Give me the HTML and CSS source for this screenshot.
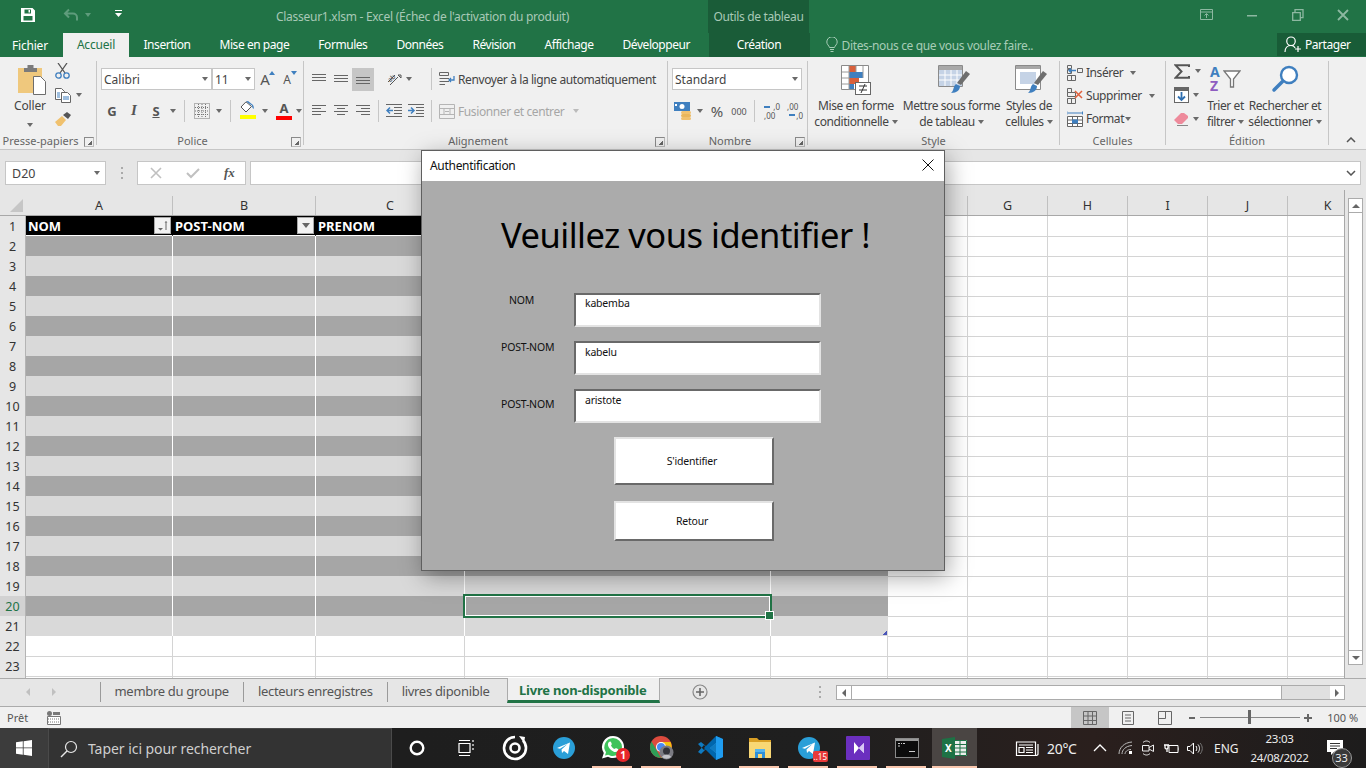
FILE: index.html
```html
<!DOCTYPE html>
<html lang="fr">
<head>
<meta charset="utf-8">
<title>Classeur1.xlsm - Excel</title>
<link rel="stylesheet" href="styles.css">
</head>
<body>
<div class="app">

<header class="titlebar">
  <svg class="qat-save" width="16" height="16" viewBox="0 0 16 16"><path fill="#fff" fill-rule="evenodd" d="M1 1h11.5L15 3.5V15H1zM4.5 2.5V6.5h6.5V2.5zM3.5 9v4.5h9V9z"/><rect x="8.5" y="3" width="1.5" height="2.5" fill="#fff"/></svg>
  <svg class="qat-undo" width="16" height="14" viewBox="0 0 16 14"><path fill="none" stroke="#5f9c7c" stroke-width="2" d="M6 1.5 2 5.5l4 4M2.5 5.5H10a4 4 0 0 1 4 4v3"/></svg>
  <span class="qat-dd"></span>
  <svg class="qat-more" width="7" height="7" viewBox="0 0 7 7"><path fill="#fff" d="M0 0h7v1H0zM0 3h7L3.5 7z"/></svg>
  <div class="doc-title">Classeur1.xlsm - Excel (Échec de l'activation du produit)</div>
  <div class="context-title">Outils de tableau</div>
  <div class="win-btns">
    <svg width="14" height="12" viewBox="0 0 14 12"><path fill="none" stroke="#8db8a1" d="M.5.5h12v10H.5zM.5 3h12M6.5 9V5M4.5 6.5l2-2 2 2"/></svg>
    <svg width="12" height="12" viewBox="0 0 12 12"><rect y="6" width="10" height="1.5" fill="#8db8a1"/></svg>
    <svg width="12" height="12" viewBox="0 0 12 12"><path fill="none" stroke="#8db8a1" stroke-width="1.3" d="M.7 3.7h7.6v7.600H.7zM3 3.5V.7h8v8H8.5"/></svg>
    <svg width="12" height="12" viewBox="0 0 12 12"><path stroke="#8db8a1" stroke-width="1.8" d="M1 1l10 10M11 1 1 11"/></svg>
  </div>
</header>

<nav class="menutabs">
  <a class="mt mt-file">Fichier</a>
  <a class="mt mt-active">Accueil</a>
  <a class="mt">Insertion</a>
  <a class="mt">Mise en page</a>
  <a class="mt">Formules</a>
  <a class="mt">Données</a>
  <a class="mt">Révision</a>
  <a class="mt">Affichage</a>
  <a class="mt">Développeur</a>
  <a class="mt mt-context">Création</a>
  <div class="tell">
    <svg width="12" height="16" viewBox="0 0 12 16"><path fill="none" stroke="#a7cdb7" d="M3.5 10.5C3 8.5.8 7.5.8 5a5.2 5.2 0 0 1 10.400 0c0 2.500-2.200 3.500-2.700 5.500zM4 12.5h4M4.500 14.500h3"/></svg>
    <span>Dites-nous ce que vous voulez faire..</span>
  </div>
  <div class="share">
    <svg width="18" height="17" viewBox="0 0 18 17"><path fill="none" stroke="#fff" stroke-width="1.2" d="M1 16c0-4 2.500-6.500 6-6.500S10.500 11 11 12M7 9.500a4.200 4.200 0 1 0 0-8.500 4.200 4.200 0 0 0 0 8.500zM14 10v6M11 13h6"/></svg>
    <span>Partager</span>
  </div>
</nav>

<section class="ribbon">
  <div class="group g-clip">
    <div class="gbody">
      <div class="big big-paste">
        <svg class="paste-ic" width="28" height="30" viewBox="0 0 28 30"><rect y="3" width="24" height="25" fill="#efc87d"/><path fill="#7b7b7b" d="M6 7V3h3.500V0h6v3H19v4z"/><path fill="#fff" stroke="#6d6d6d" d="M15.500 11.500h7l5 5v13h-12z"/></svg>
        <span>Coller</span>
        <span class="dd dd-paste"></span>
      </div>
      <div class="clipcol">
        <div class="cliprow"><svg width="15" height="16" viewBox="0 0 15 16"><path stroke="#555" stroke-width="1.3" d="M3 0l7 10M12 0 5 10"/><circle cx="3.5" cy="12.5" r="2.7" fill="none" stroke="#3f7fbf" stroke-width="1.3"/><circle cx="11.5" cy="12.5" r="2.7" fill="none" stroke="#3f7fbf" stroke-width="1.3"/></svg></div>
        <div class="cliprow"><svg width="16" height="15" viewBox="0 0 16 15"><path fill="#fff" stroke="#666" d="M.5.5h6l3 3v8h-9z"/><path fill="#fff" stroke="#666" d="M6.500 4.500h6l3 3v7h-9z"/><path stroke="#3f7fbf" d="M2 5h3M2 7h3M2 9h3M8 9h6M8 11h6"/></svg><span class="dd dd-copy"></span></div>
        <div class="cliprow"><svg width="16" height="14" viewBox="0 0 16 14"><path fill="#f0c16e" d="M0 10l7-6 4 4-5 6H3z"/><path fill="#555" d="M8 3l4-3 4 3-3 4z"/></svg></div>
      </div>
    </div>
    <div class="glabel"><span>Presse-papiers</span><i class="launch"></i></div>
  </div>

  <div class="group g-font">
    <div class="gbody stack">
      <div class="trow">
        <div class="combo c-font">Calibri<span class="dd"></span></div>
        <div class="combo c-size">11<span class="dd"></span></div>
        <span class="tb grow-a big-a">A<i class="tri-up"></i></span>
        <span class="tb grow-a small-a">A<i class="tri-down"></i></span>
      </div>
      <div class="trow row2">
        <span class="tb fmt fmt-b">G</span>
        <span class="tb fmt fmt-i">I</span>
        <span class="tb fmt fmt-u">S</span>
        <span class="dd"></span>
        <span class="vsep vs5"></span>
        <span class="tb tb-m3"><svg width="16" height="16" viewBox="0 0 16 16"><path fill="none" stroke="#777" stroke-dasharray="1 1" d="M.5.5h15v15H.5zM8 1v14M1 8h14M4.5 1v14M11.5 1v14M1 4.5h14M1 11.5h14"/></svg></span>
        <span class="dd"></span>
        <span class="vsep vs5"></span>
        <span class="tb tb-m3 colorbtn"><svg width="16" height="12" viewBox="0 0 16 12"><path fill="#fff" stroke="#555" d="M6 .8 1 6l5 5 5.500-5.500z"/><path fill="#3f7fbf" d="M6 .5 8 0l5 4c1 2 1 3 .5 4-1-1-1.500-2-1.500-3.500z"/></svg><i class="bar bar-y"></i></span>
        <span class="dd"></span>
        <span class="tb tb-n tb-m4 colorbtn"><b class="a-letter">A</b><i class="bar bar-r"></i></span>
        <span class="dd"></span>
      </div>
    </div>
    <div class="glabel"><span>Police</span><i class="launch"></i></div>
  </div>

  <div class="group g-align">
    <div class="gbody aligncols">
      <div class="stack acol">
        <div class="trow">
          <span class="tb"><svg width="14" height="10" viewBox="0 0 14 10"><path stroke="#666" d="M0 .5h14M0 3.5h14M0 6.5h14"/></svg></span>
          <span class="tb"><svg width="14" height="10" viewBox="0 0 14 10"><path stroke="#666" d="M0 1.5h14M0 4.5h14M0 7.5h14"/></svg></span>
          <span class="tb tb-on"><svg width="14" height="10" viewBox="0 0 14 10"><path stroke="#666" d="M0 3.5h14M0 6.5h14M0 9.5h14"/></svg></span>
          <span class="tb tb-n tb-m11"><svg width="16" height="16" viewBox="0 0 16 16"><path fill="none" stroke="#555" d="M2 11 9 4M4 14l8-8M12 4l3 3v-3z"/><text x="2" y="10" font-size="6.500" fill="#444" transform="rotate(-40 5 8)">ab</text></svg></span>
          <span class="dd"></span>
          <span class="vsep vs-end"></span>
        </div>
        <div class="trow row2">
          <span class="tb"><svg width="14" height="12" viewBox="0 0 14 12"><path stroke="#666" d="M0 .5h14M0 3.5h9M0 6.5h14M0 9.5h9"/></svg></span>
          <span class="tb"><svg width="14" height="12" viewBox="0 0 14 12"><path stroke="#666" d="M0 .5h14M3 3.5h8M0 6.5h14M3 9.5h8"/></svg></span>
          <span class="tb"><svg width="14" height="12" viewBox="0 0 14 12"><path stroke="#666" d="M0 .5h14M5 3.5h9M0 6.5h14M5 9.5h9"/></svg></span>
          <span class="vsep vs4"></span>
          <span class="tb tb-n tb-m3"><svg width="16" height="14" viewBox="0 0 16 14"><path stroke="#666" d="M0 .5h16M8 3.5h8M8 6.5h8M8 9.5h8M0 12.5h16"/><path stroke="#3f7fbf" stroke-width="1.5" fill="none" d="M7 6.5H1M4 3.5l-3 3 3 3"/></svg></span>
          <span class="tb tb-m2"><svg width="16" height="14" viewBox="0 0 16 14"><path stroke="#666" d="M0 .5h16M8 3.5h8M8 6.5h8M8 9.5h8M0 12.5h16"/><path stroke="#3f7fbf" stroke-width="1.5" fill="none" d="M0 6.5h6M3 3.5l3 3-3 3"/></svg></span>
          <span class="vsep vs-end"></span>
        </div>
      </div>
      <div class="stack bcol">
        <div class="trow wrap-row">
          <svg width="16" height="16" viewBox="0 0 16 16"><path fill="none" stroke="#666" d="M.5 1.5h9v3h-9zM.5 7.5H10M.5 10.5H10M.5 13.5H6"/><path fill="none" stroke="#3f7fbf" stroke-width="1.3" d="M15 5v4h-5M12 7l-2 2 2 2"/></svg>
          <span class="wraptext">Renvoyer à la ligne automatiquement</span>
        </div>
        <div class="trow row2 wrap-row dim">
          <svg width="16" height="15" viewBox="0 0 16 15"><path fill="none" stroke="#b5b5b5" d="M.5.5h15v14H.5zM.5 4.5h15M.5 10.5h15M5 4.5v6M11 4.5v6M6 7.5h4"/></svg>
          <span class="wraptext">Fusionner et centrer</span>
          <span class="dd dd-merge"></span>
        </div>
      </div>
    </div>
    <div class="glabel"><span>Alignement</span><i class="launch"></i></div>
  </div>

  <div class="group g-num">
    <div class="gbody stack">
      <div class="trow"><div class="combo c-num">Standard<span class="dd"></span></div></div>
      <div class="trow row2">
        <span class="tb"><svg width="18" height="18" viewBox="0 0 18 18"><rect width="16" height="9" fill="#3f7fbf"/><circle cx="8" cy="4.5" r="2.5" fill="#fff"/><rect x="1" y="2" width="2" height="2" fill="#fff"/><rect x="7" y="9" width="10" height="3" rx="1.5" fill="#f0c16e"/><rect x="7" y="12" width="10" height="3" rx="1.5" fill="#e9b65b"/><rect x="7" y="15" width="10" height="3" rx="1.5" fill="#f0c16e"/></svg></span>
        <span class="dd"></span>
        <span class="tb pct">%</span>
        <span class="tb thou">000</span>
        <span class="vsep vs4"></span>
        <span class="tb tb-m3 dec-ic"><i class="dec-top">,0</i><i class="dec-arrow-l"></i><i class="dec-bot">,00</i></span>
        <span class="tb tb-m1 dec-ic"><i class="dec-top-l">,00</i><i class="dec-arrow-r"></i><i class="dec-bot-r">,0</i></span>
      </div>
    </div>
    <div class="glabel"><span>Nombre</span><i class="launch"></i></div>
  </div>

  <div class="group g-style">
    <div class="gbody bigs">
      <div class="big b-cond">
        <svg width="30" height="30" viewBox="0 0 30 30"><path fill="#fff" stroke="#8a8a8a" d="M.5.5h27v24H.5z"/><rect x="8" y="1" width="7" height="6" fill="#d9603b"/><rect x="8" y="7" width="14" height="6" fill="#3f7fbf"/><rect x="8" y="13" width="10" height="6" fill="#d9603b"/><rect x="8" y="19" width="5" height="5" fill="#3f7fbf"/><path stroke="#9a9a9a" d="M8 1v24M15 1v6M22 1v12M1 7h7M1 13h7M1 19h7"/><rect x="14.5" y="17.5" width="15" height="12" fill="#fff" stroke="#666"/><path stroke="#333" d="M18 21h8M18 25h8M20 28l4-9"/></svg>
        <span class="blabel">Mise en forme</span>
        <span class="blabel">conditionnelle<i class="dd dd-in"></i></span>
      </div>
      <div class="big b-table">
        <svg class="shift-ic" width="32" height="30" viewBox="0 0 32 30"><path fill="#fff" stroke="#8a8a8a" d="M.5.5h24v21H.5z"/><rect x="1" y="1" width="23" height="4" fill="#a8a8a8"/><path fill="#c5d3e6" d="M1 5h23v16H1z"/><path stroke="#fff" d="M7 5v16M13 5v16M19 5v16M1 10h23M1 15h23"/><path fill="#6e6e6e" d="M28 6l4 3-9 11-4-2z"/><path fill="#3f7fbf" d="M18 19l4 2c0 4-3 7-9 7 3-2 2-7 5-9z"/></svg>
        <span class="blabel">Mettre sous forme</span>
        <span class="blabel">de tableau<i class="dd dd-in"></i></span>
      </div>
      <div class="big b-cell">
        <svg class="shift-ic" width="32" height="30" viewBox="0 0 32 30"><path fill="#fff" stroke="#8a8a8a" d="M.5.5h25v24H.5z"/><rect x="1" y="1" width="24" height="3" fill="#a8a8a8"/><rect x="5" y="7" width="16" height="12" fill="#c5d3e6"/><path fill="#6e6e6e" d="M28 6l4 3-9 11-4-2z"/><path fill="#3f7fbf" d="M18 19l4 2c0 4-3 7-9 7 3-2 2-7 5-9z"/></svg>
        <span class="blabel">Styles de</span>
        <span class="blabel">cellules<i class="dd dd-in"></i></span>
      </div>
    </div>
    <div class="glabel"><span>Style</span></div>
  </div>

  <div class="group g-cells">
    <div class="gbody cellcol">
      <div class="cellrow">
        <svg width="16" height="16" viewBox="0 0 16 16"><path fill="none" stroke="#666" d="M.5 4.5h4v4h-4zM.5 10.5h8v5h-8zM4.5 10.5v5M.5.5h4v3h-4zM10.5 3.5h5v4h-5z"/><path fill="none" stroke="#3f7fbf" stroke-width="1.3" d="M9 5.5H2M4 3.5l-2 2 2 2"/></svg>
        <span>Insérer</span><i class="dd dd-m1"></i>
      </div>
      <div class="cellrow">
        <svg width="16" height="16" viewBox="0 0 16 16"><path fill="none" stroke="#666" d="M.5.5h4v4h-4zM.5 4.5h8v4h-8zM.5 10.5h8v5h-8zM4.5 10.5v5"/><path stroke="#e0603c" stroke-width="1.5" d="M8 3l7 7M15 3l-7 7"/></svg>
        <span>Supprimer</span><i class="dd dd-m1"></i>
      </div>
      <div class="cellrow">
        <svg width="16" height="16" viewBox="0 0 16 16"><path stroke="#3f7fbf" fill="none" d="M0 .5v3M15.5.5v3M1 2h14"/><path fill="#fff" stroke="#666" d="M.5 5.5h15v10H.5zM5.5 5.5v10M10.5 5.5v10M.5 9h15M.5 12.5h15"/><rect x="5" y="8.5" width="6" height="4" fill="#3f7fbf"/></svg>
        <span>Format</span><i class="dd dd-fm"></i>
      </div>
    </div>
    <div class="glabel"><span>Cellules</span></div>
  </div>

  <div class="group g-edit">
    <div class="gbody editcols">
      <div class="editcol">
        <div class="editrow"><svg width="16" height="15" viewBox="0 0 16 15"><path fill="none" stroke="#555" stroke-width="2" d="M15 3V1.200H1.500L7.500 7.500 1.500 13.800H15V12"/></svg><i class="dd dd-e1"></i></div>
        <div class="editrow"><svg width="15" height="16" viewBox="0 0 15 16"><rect x=".5" y=".5" width="14" height="15" fill="#fff" stroke="#666"/><rect x="1" y="1" width="13" height="3" fill="#666"/><path stroke="#2f6fb0" fill="none" stroke-width="1.8" d="M7.5 5v8M4 9.5l3.5 3.500L11 9.500"/></svg><i class="dd dd-e2"></i></div>
        <div class="editrow"><svg width="15" height="14" viewBox="0 0 15 14"><path fill="#ee8a9b" d="M0 8l7-7h3l4 3v2l-6 6H4z"/><path stroke="#888" d="M3 13.5h11"/></svg><i class="dd dd-e2"></i></div>
      </div>
      <div class="big b-sort">
        <div class="sort-ic">
          <span class="sort-letters"><i class="az-a">A</i><i class="az-z">Z</i></span>
          <svg width="18" height="18" viewBox="0 0 18 18"><path fill="#fff" stroke="#777" stroke-width="1.3" d="M1 1h16l-6.500 8v8h-3V9z"/></svg>
        </div>
        <span class="blabel">Trier et</span>
        <span class="blabel">filtrer<i class="dd dd-in"></i></span>
      </div>
      <div class="big b-find">
        <svg width="28" height="28" viewBox="0 0 28 28"><circle cx="18" cy="10" r="8" fill="#fff" stroke="#3f7fbf" stroke-width="2.4"/><path stroke="#3f7fbf" stroke-width="3.5" stroke-linecap="round" d="M11.5 16.5 3 25"/></svg>
        <span class="blabel">Rechercher et</span>
        <span class="blabel">sélectionner<i class="dd dd-in"></i></span>
      </div>
    </div>
    <div class="glabel"><span>Édition</span></div>
  </div>

  <div class="collapse"><svg width="10" height="6" viewBox="0 0 10 6"><path fill="none" stroke="#555" stroke-width="1.5" d="M1 5l4-4 4 4"/></svg></div>
</section>

<section class="formula">
  <div class="namebox">D20<span class="dd dd-name"></span></div>
  <div class="fdots"></div>
  <div class="fbtns">
    <svg width="12" height="12" viewBox="0 0 12 12"><path stroke="#c0c0c0" stroke-width="1.6" d="M1 1l10 10M11 1 1 11"/></svg>
    <svg width="14" height="12" viewBox="0 0 14 12"><path fill="none" stroke="#c0c0c0" stroke-width="2" d="M1 6l4 4 8-8"/></svg>
    <span class="fx">fx</span>
  </div>
  <div class="finput"><svg width="10" height="6" viewBox="0 0 10 6"><path fill="none" stroke="#555" stroke-width="1.5" d="M1 1l4 4 4-4"/></svg></div>
</section>

<section class="sheet">
  <div class="grid">
    <div class="colheads">
      <div class="corner"><i></i></div>
      <div class="ch">A</div><div class="ch">B</div><div class="ch">C</div><div class="ch">D</div><div class="ch">E</div><div class="ch">F</div><div class="ch">G</div><div class="ch">H</div><div class="ch">I</div><div class="ch">J</div><div class="ch">K</div>
    </div>
    <div class="row head"><b>1</b><i>NOM<span class="filter"><svg width="10" height="10" viewBox="0 0 10 10"><path fill="#666" d="M0 7h5L2.5 9.5zM6.5 1.5 8 0l1.5 1.5H8.500V9h-1V1.500z"/></svg></span></i><i>POST-NOM<span class="filter"><svg width="8" height="5" viewBox="0 0 8 5"><path fill="#666" d="M0 0h8L4 5z"/></svg></span></i><i>PRENOM</i><i></i><i></i><i></i><i></i><i></i><i></i><i></i><i></i></div>
    <div class="row dark"><b>2</b><i></i><i></i><i></i><i></i><i></i><i></i><i></i><i></i><i></i><i></i><i></i></div>
    <div class="row light"><b>3</b><i></i><i></i><i></i><i></i><i></i><i></i><i></i><i></i><i></i><i></i><i></i></div>
    <div class="row dark"><b>4</b><i></i><i></i><i></i><i></i><i></i><i></i><i></i><i></i><i></i><i></i><i></i></div>
    <div class="row light"><b>5</b><i></i><i></i><i></i><i></i><i></i><i></i><i></i><i></i><i></i><i></i><i></i></div>
    <div class="row dark"><b>6</b><i></i><i></i><i></i><i></i><i></i><i></i><i></i><i></i><i></i><i></i><i></i></div>
    <div class="row light"><b>7</b><i></i><i></i><i></i><i></i><i></i><i></i><i></i><i></i><i></i><i></i><i></i></div>
    <div class="row dark"><b>8</b><i></i><i></i><i></i><i></i><i></i><i></i><i></i><i></i><i></i><i></i><i></i></div>
    <div class="row light"><b>9</b><i></i><i></i><i></i><i></i><i></i><i></i><i></i><i></i><i></i><i></i><i></i></div>
    <div class="row dark"><b>10</b><i></i><i></i><i></i><i></i><i></i><i></i><i></i><i></i><i></i><i></i><i></i></div>
    <div class="row light"><b>11</b><i></i><i></i><i></i><i></i><i></i><i></i><i></i><i></i><i></i><i></i><i></i></div>
    <div class="row dark"><b>12</b><i></i><i></i><i></i><i></i><i></i><i></i><i></i><i></i><i></i><i></i><i></i></div>
    <div class="row light"><b>13</b><i></i><i></i><i></i><i></i><i></i><i></i><i></i><i></i><i></i><i></i><i></i></div>
    <div class="row dark"><b>14</b><i></i><i></i><i></i><i></i><i></i><i></i><i></i><i></i><i></i><i></i><i></i></div>
    <div class="row light"><b>15</b><i></i><i></i><i></i><i></i><i></i><i></i><i></i><i></i><i></i><i></i><i></i></div>
    <div class="row dark"><b>16</b><i></i><i></i><i></i><i></i><i></i><i></i><i></i><i></i><i></i><i></i><i></i></div>
    <div class="row light"><b>17</b><i></i><i></i><i></i><i></i><i></i><i></i><i></i><i></i><i></i><i></i><i></i></div>
    <div class="row dark"><b>18</b><i></i><i></i><i></i><i></i><i></i><i></i><i></i><i></i><i></i><i></i><i></i></div>
    <div class="row light"><b>19</b><i></i><i></i><i></i><i></i><i></i><i></i><i></i><i></i><i></i><i></i><i></i></div>
    <div class="row dark current"><b>20</b><i></i><i></i><i></i><i class="selected"><span class="selbox"></span></i><i></i><i></i><i></i><i></i><i></i><i></i><i></i></div>
    <div class="row light"><b>21</b><i></i><i></i><i></i><i></i><i class="tbl-end"><span class="resizer"></span></i><i></i><i></i><i></i><i></i><i></i><i></i></div>
    <div class="row"><b>22</b><i></i><i></i><i></i><i></i><i></i><i></i><i></i><i></i><i></i><i></i><i></i></div>
    <div class="row"><b>23</b><i></i><i></i><i></i><i></i><i></i><i></i><i></i><i></i><i></i><i></i><i></i></div>
    <div class="row"><b></b><i></i><i></i><i></i><i></i><i></i><i></i><i></i><i></i><i></i><i></i><i></i></div>
  </div>
  <div class="vscroll">
    <div class="sbtn"><i class="t-up"></i></div>
    <div class="strack"></div>
    <div class="sbtn"><i class="t-dn"></i></div>
  </div>
</section>

<section class="sheettabs">
  <div class="tabnav"><i class="nav-l"></i><i class="nav-r"></i></div>
  <a class="stab">membre du groupe</a>
  <a class="stab">lecteurs enregistres</a>
  <a class="stab">livres diponible</a>
  <a class="stab-on">Livre non-disponible</a>
  <svg class="addsheet" width="16" height="16" viewBox="0 0 16 16"><circle cx="8" cy="8" r="7" fill="none" stroke="#888" stroke-width="1.2"/><path stroke="#666" stroke-width="1.6" d="M8 4v8M4 8h8"/></svg>
  <div class="tabdots"></div>
  <div class="hscroll">
    <div class="hbtn"><i class="t-l"></i></div>
    <div class="hthumb"></div>
    <div class="htrack"></div>
    <div class="hbtn"><i class="t-r"></i></div>
  </div>
</section>

<footer class="status">
  <span class="ready">Prêt</span>
  <svg width="14" height="14" viewBox="0 0 14 14"><circle cx="2.5" cy="2.5" r="2.5" fill="#777"/><rect x="6" y="1" width="7" height="3" fill="#777"/><path fill="#fff" stroke="#777" d="M.5 5.5h13v8H.5z"/><path stroke="#777" stroke-dasharray="1 1" d="M1 8h12M1 11h12"/></svg>
  <div class="views">
    <span class="view view-on"><svg width="14" height="14" viewBox="0 0 14 14"><path fill="none" stroke="#666" d="M.5.5h13v13H.5zM5 .5v13M9.500.5v13M.5 5h13M.5 9.500h13"/></svg></span>
    <span class="view"><svg width="14" height="14" viewBox="0 0 14 14"><path fill="none" stroke="#666" d="M1.5.5h11v13h-11zM4 4h6M4 7h6M4 10h6"/></svg></span>
    <span class="view"><svg width="14" height="14" viewBox="0 0 14 14"><path fill="none" stroke="#666" d="M.5.5h13v13H.5zM7.500.5v7H.5"/></svg></span>
  </div>
  <div class="zoomctl">
    <i class="zm"></i>
    <div class="slider"><i></i></div>
    <i class="zp"></i>
    <span class="zval">100 %</span>
  </div>
</footer>

<footer class="taskbar">
  <div class="start"><svg width="16" height="16" viewBox="0 0 16 16"><path fill="#fff" d="M0 2.300 6.800 1.300V7.500H0zM7.600 1.200 16 0V7.500H7.600zM0 8.300H6.800V14.700L0 13.700zM7.600 8.300H16V16L7.600 14.800z"/></svg></div>
  <div class="searchbox">
    <svg width="18" height="18" viewBox="0 0 18 18"><circle cx="11" cy="7" r="5.5" fill="none" stroke="#e8e8e8" stroke-width="1.2"/><path stroke="#e8e8e8" stroke-width="1.4" d="M7 11 1 17"/></svg>
    <span>Taper ici pour rechercher</span>
  </div>
  <div class="apps">
    <div class="app-i"><svg width="16" height="16" viewBox="0 0 16 16"><circle cx="8" cy="8" r="6.3" fill="none" stroke="#fff" stroke-width="2.4"/></svg></div>
    <div class="app-i"><svg width="18" height="18" viewBox="0 0 18 18"><path fill="none" stroke="#fff" stroke-width="1.2" d="M2 4.5h11v9H2zM2 1.500h11M2 16.500h11M16 1v2M16 5v2M16 9v2"/></svg></div>
    <div class="app-i"><svg width="26" height="26" viewBox="0 0 26 26"><path fill="none" stroke="#fff" stroke-width="2.6" d="M13 2a11 11 0 1 0 11 11c0-3-1-5.500-3-7.500"/><circle cx="13" cy="13" r="4.5" fill="none" stroke="#fff" stroke-width="2.6"/><path fill="#fff" d="M17 1l6 1-1 6z"/></svg></div>
    <div class="app-i"><svg width="22" height="22" viewBox="0 0 22 22"><circle cx="11" cy="11" r="11" fill="#2a9fd8"/><path fill="#fff" d="M4 11l13-5.500-2 11.500-4-3-2 2-.5-3.500 6-5.500-7.500 4.800z"/></svg></div>
    <div class="app-i on"><svg width="24" height="26" viewBox="0 0 24 26"><path fill="#fff" d="M12 1a11 11 0 0 1 0 22c-2 0-3.500-.5-5-1.300L1 23.500l1.800-5.500A11 11 0 0 1 12 1z"/><path fill="#3fc35b" d="M12 3a9 9 0 0 1 0 18c-1.800 0-3.300-.5-4.700-1.300L4 20.500l1-3.300A9 9 0 0 1 12 3z"/><path fill="#fff" d="M8 7c1-1 2-.5 2.500 1s0 2-.5 2.500c1 1.800 2 2.800 3.500 3.500.5-.5 1-1.200 2.500-.5s2 1.500 1 2.500c-2 2-5 1-7.500-1.500S6 9 8 7z"/></svg><span class="badge badge-wa">1</span></div>
    <div class="app-i on"><svg width="24" height="24" viewBox="0 0 24 24"><circle cx="11" cy="11" r="11" fill="#dd4b3e"/><path fill="#f4c20d" d="M11 6h9.500A11 11 0 0 1 11 22l5-8z"/><path fill="#2f9e57" d="M1.500 5.500 6.500 14l4.500 8A11 11 0 0 1 1.500 5.500z"/><circle cx="11" cy="11" r="5" fill="#fff"/><circle cx="11" cy="11" r="4" fill="#4a8af4"/><circle cx="16.5" cy="16.5" r="7" fill="#7b7b82"/><circle cx="16.5" cy="15" r="3.5" fill="#33333a"/><path fill="#c3c3c8" d="M12 21c1-3 8-3 9 0a7 7 0 0 1-9 0z"/></svg></div>
    <div class="app-i"><svg width="26" height="26" viewBox="0 0 26 26"><path fill="#0f7ac0" d="M0 9l3-2 6 5-3 3zM0 17l3 2 6-6-3-3z"/><path fill="#0066ad" d="M18 1l7 3v18l-7 3-12-12z"/><path fill="#1f9cf0" d="M18 1l7 3v18l-7 3zM18 8l-6 5 6 5z"/><path fill="#0f7ac0" d="M18 8v10l-6-5z"/></svg></div>
    <div class="app-i on"><svg width="22" height="20" viewBox="0 0 22 20"><path fill="#d99f25" d="M0 0h8l2 2h12v4H0z"/><path fill="#f8d775" d="M0 4h22v16H0z"/><path fill="#2e8fd8" d="M6 11h10v9h-3v-4H9v4H6z"/><rect x="6" y="11" width="10" height="3" fill="#54b4ee"/></svg></div>
    <div class="app-i on"><svg width="22" height="22" viewBox="0 0 22 22"><circle cx="11" cy="11" r="11" fill="#2a9fd8"/><path fill="#fff" d="M4 11l13-5.500-2 11.500-4-3-2 2-.5-3.500 6-5.500-7.500 4.800z"/></svg><span class="badge badge-tg">..15</span></div>
    <div class="app-i on"><svg width="24" height="24" viewBox="0 0 24 24"><rect width="24" height="24" rx="1" fill="#6b2fbf"/><path fill="#fff" d="M8 6v12l5-6zM13 12l5-5v10z"/><path fill="#d8c8f5" d="M13 12l5-5v10z"/></svg></div>
    <div class="app-i on"><svg width="24" height="20" viewBox="0 0 24 20"><rect x=".5" y=".5" width="23" height="19" fill="#0c0c0c" stroke="#8a8a8a"/><rect x="1" y="1" width="22" height="2" fill="#9a9a9a"/><path stroke="#ccc" d="M3 5.500h2M6 5.500h1M8 5.500h2M3 8h2M14 13.500h6"/></svg></div>
    <div class="app-i on active"><svg width="25" height="22" viewBox="0 0 25 22"><rect x="11" y="3" width="14" height="16" fill="#fff" opacity=".9"/><path stroke="#1d7245" fill="none" d="M12 3.500h12.500v15H12zM18 3.500v15M12 7.500h12.500M12 11h12.500M12 15h12.500"/><path fill="#1d7245" d="M0 2l13-2v22L0 20z"/><text x="3" y="15" font-size="10" font-weight="700" font-family="Noto Sans" fill="#fff">X</text></svg></div>
  </div>
  <div class="tray">
    <svg class="tr-news" width="24" height="17" viewBox="0 0 24 17"><path fill="none" stroke="#fff" stroke-width="1.2" d="M1.500 2h19v13.500h-19zM23 4v10c0 1-1 1.500-2.500 1.500M4 5h14M4 7.500h5v5H4zM11 7.500h7M11 10h7M11 12.500h7"/></svg>
    <span class="tr-temp">20°C</span>
    <svg class="tr-up" width="14" height="8" viewBox="0 0 14 8"><path fill="none" stroke="#fff" stroke-width="1.3" d="M1 7l6-6 6 6"/></svg>
    <svg class="tr-wifi" width="15" height="14" viewBox="0 0 15 14"><path fill="none" stroke="#bbb" d="M1 13C1 7 6 1.500 14 1M4 13c0-4 3.500-8 10-8.500M7 13c0-2 2-4.500 6-4.500"/><rect x="11" y="10" width="3" height="3" fill="#fff"/></svg>
    <svg class="tr-cam" width="14" height="16" viewBox="0 0 14 16"><path fill="none" stroke="#eee" d="M1.500 5.500h6.500v5.500H1.500zM8 7.500l4.500-2.500v6.500l-4.500-2.500M2 2.500c2-2 5-2 7 0M2 13.500c2 2 5 2 7 0"/></svg>
    <svg class="tr-pow" width="15" height="11" viewBox="0 0 15 11"><path fill="none" stroke="#fff" d="M5 2.500h9v7H5zM15 4.500v3"/><path fill="none" stroke="#fff" stroke-width="1.3" d="M1 2v2.500c0 1 1 1.500 2 1.500M4 2v2.500c0 1-1 1.500-1 1.500v3M0 2h5"/></svg>
    <svg class="tr-vol" width="16" height="13" viewBox="0 0 16 13"><path fill="none" stroke="#fff" d="M.5 4.500h2.500l3.500-3.500v11L3 8.500H.5zM9 4c1 1.500 1 3.500 0 5M11 2.500c2 2.500 2 5.500 0 8"/><path fill="none" stroke="#777" d="M13 1c3 3 3 8 0 11"/></svg>
    <span class="tr-lang">ENG</span>
    <div class="tr-clock"><span>23:03</span><span>24/08/2022</span></div>
    <div class="tr-notif">
      <svg width="16" height="15" viewBox="0 0 16 15"><path fill="#fff" d="M0 0h16v12H7l-3 3v-3H0z"/><path stroke="#333" d="M3 3.500h10M3 6h10M3 8.500h7"/></svg>
      <span class="notif-count">33</span>
    </div>
  </div>
</footer>

<div class="dialog">
  <div class="dlg-title">
    <span>Authentification</span>
    <svg width="12" height="12" viewBox="0 0 12 12"><path stroke="#111" stroke-width="1" d="M.5.5l11 11M11.500.5l-11 11"/></svg>
  </div>
  <div class="dlg-body">
    <h1 class="dlg-heading">Veuillez vous identifier !</h1>
    <div class="frow"><label class="flabel fl-nom">NOM</label><div class="field field-first">kabemba</div></div>
    <div class="frow"><label class="flabel fl-post">POST-NOM</label><div class="field">kabelu</div></div>
    <div class="frow"><label class="flabel fl-pre">POST-NOM</label><div class="field">aristote</div></div>
    <button class="dbtn dbtn-login">S'identifier</button>
    <button class="dbtn dbtn-back">Retour</button>
  </div>
</div>

</div>
</body>
</html>
```

FILE: styles.css
```css
*{box-sizing:border-box}
html,body{margin:0;padding:0;height:768px;overflow:hidden}
body{font-family:"Noto Sans","Open Sans",sans-serif;font-size:12px;color:#444}
.app{position:relative;width:1366px;height:768px;display:flex;flex-direction:column;overflow:hidden;background:#e6e6e6}
svg{display:block;flex:none}

/* title bar */
.titlebar{height:33px;background:#217346;display:flex;align-items:center;flex:none;color:#a8c9b6}
.qat-save{margin-left:20px;margin-bottom:4px}
.qat-undo{margin-left:27px;margin-bottom:4px}
.qat-dd{width:0;height:0;margin-left:6px;margin-bottom:4px;border:3px solid transparent;border-top:4px solid #5f9c7c;border-bottom:0}
.qat-more{margin-left:24px;margin-bottom:6px}
.doc-title{margin-left:154px;width:432px;letter-spacing:-.28px;white-space:nowrap}
.context-title{width:101px;height:33px;background:#1a5c38;text-align:center;line-height:33px;letter-spacing:-.35px;white-space:nowrap}
.win-btns{margin-left:auto;display:flex;align-items:center;gap:33px;padding-right:17px;margin-bottom:4px}

/* menu tabs */
.menutabs{height:24px;background:#217346;display:flex;align-items:stretch;flex:none}
.mt{color:#fff;padding:0 14.5px;line-height:23px;letter-spacing:-.45px;white-space:nowrap}
.mt-file{width:63px;padding:0 0 0 12px;line-height:25px;letter-spacing:-.2px}
.mt-active{width:66px;padding:0;text-align:center;background:#f0f0f0;color:#217346;letter-spacing:-.2px}
.mt-context{background:#1a5c38;width:101px;padding:0;margin-left:4px;text-align:center}
.tell{display:flex;align-items:center;gap:4px;margin-left:16px;color:#a7cdb7;letter-spacing:-.35px;white-space:nowrap}
.share{margin-left:auto;width:89px;background:#185c37;color:#fff;display:flex;align-items:center;gap:3px;padding:0 0 0 7px;height:23px;white-space:nowrap;letter-spacing:-.45px}

/* ribbon */
.ribbon{height:93px;background:#f0f0f0;border-bottom:1px solid #c6c6c6;display:flex;padding-top:4px;flex:none}
.group{height:84px;border-right:1px solid #c6c6c6;display:flex;flex-direction:column;flex:none}
.g-clip{width:97px}
.g-font{width:207px;padding-left:4px}
.g-align{width:364px;padding-left:4px}
.g-num{width:140px;padding-left:4px}
.g-style{width:252px;padding-left:4px}
.g-cells{width:106px;padding-left:7px}
.g-edit{width:163px;padding-left:6px}
.gbody{height:73px;flex:none;display:flex}
.glabel{height:14px;margin-bottom:-3px;display:flex;align-items:center;font-size:11px;line-height:14px;color:#666;white-space:nowrap}
.g-font .glabel,.g-align .glabel,.g-num .glabel,.g-style .glabel{margin-left:-4px}
.g-cells .glabel{margin-left:-7px}
.g-edit .glabel{margin-left:-6px}
.glabel span{flex:1;text-align:center}
.launch{width:15px;height:14px;flex:none;position:relative}
.launch::before{content:"";position:absolute;left:3px;top:3px;width:8px;height:8px;border:1px solid #8a8a8a;border-right-color:#bbb;border-bottom-color:#bbb}
.launch::after{content:"";position:absolute;left:7px;top:7px;width:4px;height:4px;background:linear-gradient(135deg,transparent 50%,#666 50%)}
.stack{flex-direction:column;padding-top:7px}
.trow{display:flex;align-items:center;height:22px}
.row2{margin-top:10px}
.dd{display:inline-flex;flex:none;width:12px;height:6px;align-items:center;justify-content:center}
.dd::before{content:"";border:3.5px solid transparent;border-top:4px solid #6a6a6a;border-bottom:0}
.tb{width:22px;height:22px;display:flex;align-items:center;justify-content:center;flex:none}
.tb-n{width:18px}
.tb-on{background:#c6c6c6;height:23px}
.tb-m1{margin-left:1px}.tb-m2{margin-left:2px}.tb-m3{margin-left:3px}.tb-m4{margin-left:4px}.tb-m11{margin-left:11px}
.vsep{width:1px;height:22px;background:#c6c6c6;flex:none}
.vs4{margin:0 3px 0 4px}
.vs5{margin:0 3px 0 5px}
.vs-end{margin-left:auto}

/* clipboard */
.big{display:flex;flex-direction:column;align-items:center;flex:none;padding-top:4px;font-size:12px;line-height:16px;letter-spacing:-.42px;white-space:nowrap}
.big>svg{height:30px;margin-bottom:3px}
.big-paste{width:40px;margin-left:10px;letter-spacing:-.15px}
.paste-ic{margin-left:4px}
.shift-ic{margin-left:4px}
.dd-paste{margin-top:8px}
.clipcol{margin-left:5px;display:flex;flex-direction:column;padding-top:2px;gap:8px}
.cliprow{display:flex;align-items:center;height:16px}
.dd-copy{margin-left:2px}

/* font group */
.combo{height:22px;background:#fff;border:1px solid #c6c6c6;display:flex;align-items:center;padding-left:2px;color:#444;flex:none}
.combo .dd{margin-left:auto}
.c-font{width:111px}
.c-size{width:43px}
.c-num{width:130px}
.grow-a{color:#555;position:relative;font-size:15px}
.big-a{margin-left:-1px}
.small-a{font-size:12px}
.tri-up,.tri-down{position:absolute;right:1px;top:3px;border:3px solid transparent}
.tri-up{border-bottom:4px solid #3f7fbf;border-top:0}
.tri-down{border-top:4px solid #3f7fbf;border-bottom:0}
.fmt{font-size:13px;font-weight:700;color:#555;margin-top:-1px}
.fmt-i{font-style:italic;font-family:"Liberation Serif",serif;font-size:15px}
.fmt-u{text-decoration:underline}
.colorbtn{position:relative;flex-direction:column;justify-content:flex-start;padding-top:1px}
.bar{display:block;width:16px;height:4px;flex:none;margin-top:2px}
.bar-y{background:#ffff00}
.bar-r{background:#ff0000;margin-top:0}
.a-letter{font-size:13px;line-height:15px;color:#555;font-weight:700}

/* align */
.aligncols{padding:0}
.acol{width:124px;display:flex}
.bcol{display:flex;padding-left:7px}
.wrap-row{gap:3px}
.wraptext{letter-spacing:-.4px;white-space:nowrap;color:#444}
.dim .wraptext{color:#a6a6a6}
.dd-merge{margin-left:3px}
.dd-merge::before{border-top-color:#bbb}

/* number */
.pct{font-size:15px;color:#555}
.thou{font-size:9px;color:#555}
.dec-ic{flex-direction:column;align-items:stretch;justify-content:center;font-size:8px;line-height:9px;color:#555;position:relative;padding:0 3px}
.dec-ic i{font-style:normal;display:block}
.dec-top,.dec-bot-r{text-align:right}
.dec-arrow-l,.dec-arrow-r{position:absolute;height:2px;width:6px;background:#3f7fbf}
.dec-arrow-l{left:3px;top:6px}
.dec-arrow-r{left:5px;bottom:6px}

/* style */
.bigs{padding:0}
.b-cond{width:88px}
.b-table{width:97px;margin-left:3px}
.b-cell{width:48px;margin-left:5px}
.blabel{display:flex;align-items:center;color:#444}
.dd-in{width:12px;margin-right:-3px}

/* cells */
.cellcol{flex-direction:column}
.cellrow{height:23px;display:flex;align-items:center;gap:3px;letter-spacing:-.45px;white-space:nowrap}
.dd-m1{margin-left:1px}
.dd-fm{margin-left:-5px}

/* edit */
.editcols{padding:0}
.editcol{width:34px;display:flex;flex-direction:column;padding-top:2px;padding-left:2px;gap:8px}
.editrow{display:flex;align-items:center;height:16px}
.dd-e1{margin-left:2px}
.dd-e2{margin-left:1px}
.b-sort{width:39px}
.b-find{width:76px;margin-left:2px}
.b-find>svg{height:28px;margin-bottom:5px}
.sort-ic{height:28px;margin-bottom:5px;display:flex;align-items:center}
.sort-letters{display:flex;flex-direction:column;width:13px;font-size:14px;font-weight:700;line-height:14px}
.sort-letters i{font-style:normal;display:block;height:14px}
.az-a{color:#3f7fbf}
.az-z{color:#8e5cc0}

.collapse{margin-left:auto;padding:76px 10px 0 0}

/* formula bar */
.formula{height:40px;background:#e6e6e6;display:flex;align-items:flex-start;padding:11px 5px 0;flex:none}
.namebox{width:101px;height:24px;background:#fff;border:1px solid #c6c6c6;display:flex;align-items:center;padding-left:6px;font-size:12.5px;color:#444}
.dd-name{margin-left:auto;margin-right:2px}
.fdots{width:2px;height:12px;margin:6px 14px 0 15px;background:repeating-linear-gradient(#aaa 0 2px,transparent 2px 5px)}
.fbtns{width:109px;height:24px;background:#fff;border:1px solid #c6c6c6;display:flex;align-items:center;padding-left:12px;gap:24px}
.fx{font-family:"Liberation Serif",serif;font-style:italic;font-weight:700;font-size:13px;color:#555}
.finput{margin-left:4px;flex:1;height:24px;background:#fff;border:1px solid #c6c6c6;display:flex;align-items:center;justify-content:flex-end;padding-right:4px}

/* sheet */
.sheet{height:488px;display:flex;flex:none;background:#e6e6e6}
.grid{width:1345px;height:488px;overflow:hidden;flex:none;border-right:1px solid #a8a8a8;background:#fff}
.colheads,.row{display:grid;grid-template-columns:26px 147px 143px 149px 306px 117px repeat(6,80px)}
.colheads{height:26px;padding-top:6px;background:#e6e6e6;border-bottom:1px solid #a8a8a8}
.corner{position:relative}
.corner i{position:absolute;right:3px;bottom:3px;border-left:13px solid transparent;border-bottom:13px solid #c6c6c6}
.ch{height:19px;line-height:19px;text-align:center;border-right:1px solid #c0c0c0;color:#333;font-size:12.5px}
.row{height:20px}
.row b{background:#e6e6e6;font-weight:400;font-size:12.5px;color:#333;text-align:center;line-height:21px;border-right:1px solid #b4b4b4}
.row i{display:block;border-right:1px solid #d4d4d4;border-bottom:1px solid #d4d4d4;font-style:normal;position:relative;min-width:0}
.dark i:nth-child(-n+6),.light i:nth-child(-n+6){border-color:#fff}
.dark i:nth-child(-n+6){background:#a6a6a6}
.light i:nth-child(-n+6){background:#d9d9d9}
.dark i:nth-child(6),.light i:nth-child(6){border-right-color:transparent}
.head i:nth-child(-n+6){background:#000;color:#fff;font-weight:700;font-size:13px;line-height:18px;border-bottom:2px solid #fff;border-right:1px solid #000;display:flex;align-items:center;padding:1px 0 0 2px;white-space:nowrap;overflow:hidden}
.filter{margin-left:auto;margin-right:1px;margin-top:-1px;width:17px;height:17px;background:#f2f2f2;border:1px solid #a8a8a8;display:flex;align-items:center;justify-content:center}
.current b{background:#d2d2d2;color:#217346}
.selbox{position:absolute;left:-2px;top:-2px;right:-2px;bottom:-2px;border:2px solid #217346;box-shadow:inset 0 0 0 1px #fff;z-index:2}
.selbox::after{content:"";position:absolute;right:-4px;bottom:-4px;width:7px;height:7px;background:#217346;border:1px solid #fff}
.resizer{position:absolute;right:0;bottom:1px;width:4px;height:4px;background:linear-gradient(135deg,transparent 40%,#4a55b8 40%)}
.vscroll{flex:1;display:flex;flex-direction:column;padding:8px 3px 0 3px;align-items:stretch}
.sbtn{height:15px;background:#fff;border:1px solid #ababab;display:flex;align-items:center;justify-content:center;flex:none}
.t-up{border:4px solid transparent;border-bottom:4px solid #666;border-top:0}
.t-dn{border:4px solid transparent;border-top:4px solid #666;border-bottom:0}
.strack{height:437px;background:#fff;border-left:1px solid #ababab;border-right:1px solid #ababab;flex:none}

/* sheet tabs */
.sheettabs{height:29px;background:#e6e6e6;border-top:1px solid #ababab;border-bottom:1px solid #ababab;display:flex;align-items:flex-start;flex:none}
.tabnav{width:100px;height:26px;display:flex;align-items:center;gap:22px;padding-left:26px}
.nav-l{border:4px solid transparent;border-right:4px solid #c0c0c0;border-left:0}
.nav-r{border:4px solid transparent;border-left:4px solid #c0c0c0;border-right:0}
.stab{font-size:13px;color:#555;border-left:1px solid #9a9a9a;margin-top:3px;height:20px;padding:0 14.5px 0 13.5px;line-height:18px;white-space:nowrap;letter-spacing:-.3px}
.stab-on{font-size:13px;line-height:24px;height:25px;background:#f0f0f0;color:#217346;font-weight:700;border:1px solid #ababab;border-top:0;border-bottom:3px solid #217346;padding:0 11px;width:153px;margin:-1px 0 0 3px;white-space:nowrap;letter-spacing:-.2px}
.addsheet{margin:5px 0 0 32px}
.tabdots{width:2px;height:12px;margin:7px 0 0 111px;background:repeating-linear-gradient(#aaa 0 2px,transparent 2px 5px)}
.hscroll{margin:6px 0 0 15px;width:509px;height:15px;display:flex;border:1px solid #ababab;background:#e6e6e6}
.hbtn{width:14px;height:13px;background:#fff;display:flex;align-items:center;justify-content:center;flex:none}
.t-l{border:4px solid transparent;border-right:4px solid #666;border-left:0}
.t-r{border:4px solid transparent;border-left:4px solid #666;border-right:0}
.hthumb{width:431px;background:#fff;border-left:1px solid #ababab;border-right:1px solid #ababab}
.htrack{flex:1;background:#e0e0e0}

/* status */
.status{height:21px;background:#f0f0f0;display:flex;align-items:center;flex:none;font-size:11px;color:#555}
.ready{margin-left:7px;margin-right:19px}
.views{margin-left:1010px;display:flex;align-items:center;height:21px}
.view{width:36px;height:21px;display:flex;align-items:center;justify-content:center;flex:none}
.view-on{width:38px;background:#c6c6c6;margin-right:1px}
.view-on+.view{margin-right:1px}
.zoomctl{display:flex;align-items:center;margin-left:6px;height:21px}
.zm{width:6px;height:2px;background:#666;flex:none}
.slider{width:100px;height:1px;background:#888;margin:0 4px 0 5px;position:relative}
.slider i{position:absolute;left:48px;top:-7px;width:3px;height:14px;background:#666}
.zp{width:8px;height:8px;flex:none;background:linear-gradient(#666,#666) center/8px 2px no-repeat,linear-gradient(#666,#666) center/2px 8px no-repeat}
.zval{margin-left:15px;color:#555}

/* taskbar */
.taskbar{height:40px;background:linear-gradient(90deg,#1d1d1d 0,#1f1f1f 60%,#2a1f1d 80%,#1d1c1c 100%);display:flex;flex:none;color:#fff}
.start{width:48px;display:flex;align-items:center;justify-content:center;background:#3c3c3c;flex:none}
.searchbox{width:344px;flex:none;background:#333;border:1px solid #4a4a4a;border-bottom:0;display:flex;align-items:center;padding-left:11px;gap:10px;color:#cfcfcf;font-size:14px;letter-spacing:-.05px;white-space:nowrap}
.apps{display:flex;flex:none}
.app-i{width:49px;height:40px;display:flex;align-items:center;justify-content:center;position:relative;flex:none}
.app-i.on::after{content:"";position:absolute;left:4px;right:5px;bottom:0;height:2px;background:#f9c7ae}
.app-i.active{background:#4a4543;width:45px;margin-left:1px}
.app-i.active::after{left:0;right:0}
.badge{position:absolute;color:#fff;background:#e8262a;font-weight:700;line-height:1}
.badge-wa{right:7px;bottom:6px;width:14px;height:14px;border-radius:50%;font-size:10px;line-height:14px;text-align:center}
.badge-tg{right:5px;bottom:6px;height:11px;font-size:8px;line-height:11px;padding:0 1px;border-radius:2px;font-weight:400;background:#e83a3a}
.tray{display:flex;align-items:center;flex:1;min-width:0;font-size:13px;color:#eee;white-space:nowrap}
.tr-news{margin-left:38px}
.tr-temp{margin-left:8px;font-size:14px;width:32px;letter-spacing:-.3px}
.tr-up{margin-left:14px}
.tr-wifi{margin-left:11px}
.tr-cam{margin-left:8px}
.tr-pow{margin-left:9px}
.tr-vol{margin-left:8px}
.tr-lang{margin-left:11px;font-size:12px}
.tr-clock{display:flex;flex-direction:column;align-items:center;margin-left:3px;width:76px;font-size:11.5px;letter-spacing:-.3px;line-height:19px}
.tr-notif{position:relative;margin-left:9px;width:20px;height:24px;padding-top:4px}
.notif-count{position:absolute;left:5px;top:12px;width:20px;height:20px;border-radius:50%;background:#3a3a3a;border:1px solid #999;font-size:11px;line-height:18px;text-align:center;color:#eee}

/* dialog */
.dialog{position:absolute;left:421px;top:150px;width:524px;height:421px;border:1px solid #5f5f5f;background:#ababab;box-shadow:3px 6px 22px rgba(0,0,0,.35);z-index:5;display:flex;flex-direction:column;font-family:"Noto Sans",sans-serif;color:#000}
.dlg-title{height:30px;background:#fff;display:flex;align-items:center;justify-content:space-between;padding:0 10px 2px 8px;flex:none;color:#111;letter-spacing:-.3px}
.dlg-body{flex:1;display:flex;flex-direction:column;padding-left:79px}
.dlg-heading{margin:26px 0 0;height:86px;font-weight:400;font-size:34.5px;line-height:56px;letter-spacing:-.5px;color:#000;white-space:nowrap}
.frow{display:flex;height:34px;margin-bottom:14px}
.flabel{width:73px;font-size:10.5px;line-height:14px;color:#111;white-space:nowrap;flex:none;letter-spacing:-.2px}
.fl-nom{padding:0 0 0 8px}
.fl-post{margin-top:-1px}
.fl-pre{margin-top:8px}
.field{width:247px;height:34px;background:#fff;border:2px solid;border-color:#696969 #e3e3e3 #e3e3e3 #696969;padding:2px 0 0 9px;font-size:10.5px;line-height:14px;letter-spacing:-.2px;color:#111}
.field-first{padding-top:1px}
.dbtn{display:block;width:160px;margin-left:113px;background:#fff;border:2px solid;border-color:#e3e3e3 #696969 #696969 #e3e3e3;font:10.5px "Noto Sans",sans-serif;letter-spacing:-.2px;color:#111;padding:0 4px 0 0;flex:none}
.dbtn-login{height:48px;margin-bottom:16px}
.dbtn-back{height:40px}
```
